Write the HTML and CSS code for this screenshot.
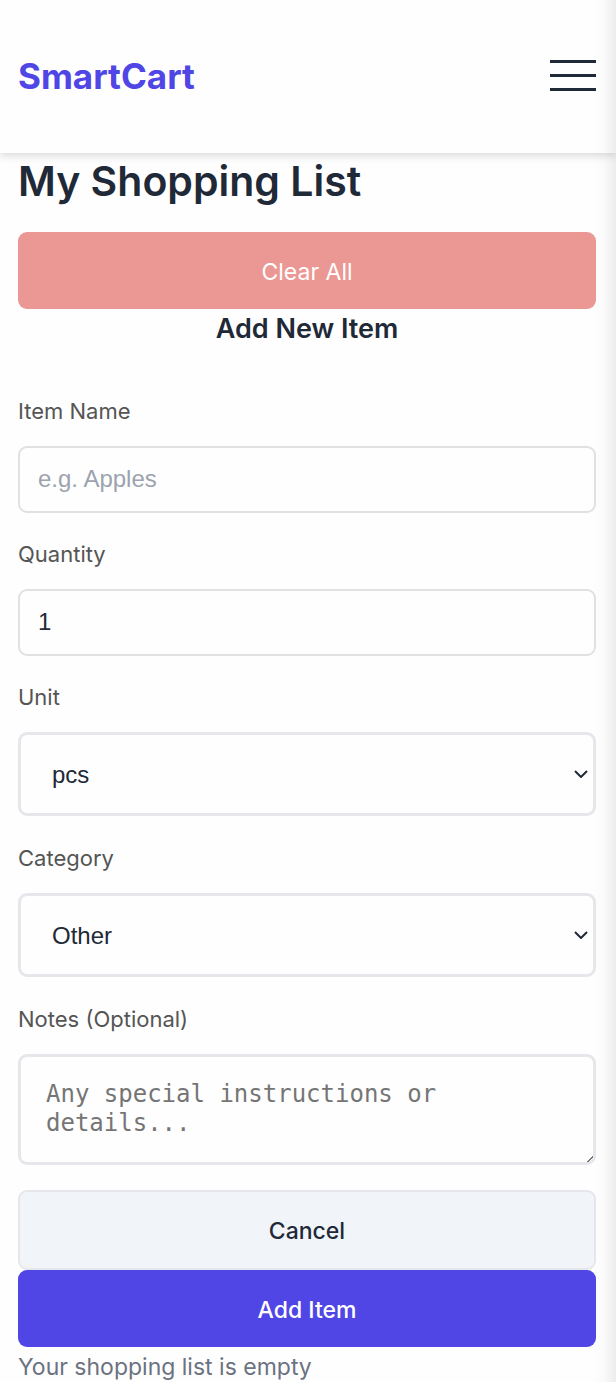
FILE: index.html
```html
<!DOCTYPE html>
<html lang="en">
<head>
<meta charset="utf-8">
<meta name="viewport" content="width=device-width, initial-scale=1">
<title>SmartCart</title>
<link rel="stylesheet" href="styles.css">
</head>
<body>
<header class="header">
  <a class="brand" href="#">SmartCart</a>
  <button class="menu" type="button" aria-label="Open menu"><span class="bar"></span><span class="bar"></span><span class="bar"></span></button>
</header>
<main class="main">
  <h1 class="title">My Shopping List</h1>
  <button class="button danger" type="button">Clear All</button>
  <h2 class="subtitle">Add New Item</h2>
  <form class="form">
    <label class="label" for="name">Item Name</label>
    <input class="field" id="name" type="text" placeholder="e.g. Apples">
    <label class="label" for="quantity">Quantity</label>
    <input class="field" id="quantity" type="text" inputmode="numeric" value="1">
    <label class="label" for="unit">Unit</label>
    <div class="select-wrap">
      <select class="select" id="unit"><option>pcs</option></select>
      <svg class="chevron" viewBox="0 0 14 8" aria-hidden="true"><path d="M1 1l6 6 6-6"/></svg>
    </div>
    <label class="label" for="category">Category</label>
    <div class="select-wrap">
      <select class="select" id="category"><option>Other</option></select>
      <svg class="chevron" viewBox="0 0 14 8" aria-hidden="true"><path d="M1 1l6 6 6-6"/></svg>
    </div>
    <label class="label" for="notes">Notes (Optional)</label>
    <textarea class="notes" id="notes" placeholder="Any special instructions or details..."></textarea>
    <button class="button secondary" type="button">Cancel</button>
    <button class="button primary" type="submit">Add Item</button>
  </form>
  <p class="empty">Your shopping list is empty</p>
</main>
<div class="edge" aria-hidden="true"></div>
</body>
</html>
```
FILE: styles.css
```css
* { box-sizing: border-box; }
html { overflow-x: hidden; }
body {
  position: relative;
  margin: 0;
  color: #1f2937;
  background: #fefefe;
  font-family: Inter, "Liberation Sans", sans-serif;
  font-size: 23px;
}
.header {
  display: flex;
  align-items: center;
  justify-content: space-between;
  padding: 53px 20px 53px 18px;
  background: #fefefe;
  box-shadow: 0 3px 8px rgba(0, 0, 0, 0.14);
}
.brand {
  color: #4f46e5;
  font-size: 35px;
  font-weight: 700;
  line-height: 47px;
  text-decoration: none;
}
.menu {
  display: flex;
  flex-direction: column;
  gap: 11px;
  width: 46px;
  padding: 0 0 2px;
  border: 0;
  background: none;
}
.bar { height: 3px; background: #1f2937; }
.main { padding: 0 20px 0 18px; }
.title {
  margin: 0 0 22px;
  font-size: 41px;
  font-weight: 600;
  line-height: 57px;
}
.button {
  display: block;
  width: 100%;
  height: 77px;
  padding: 2px 0 0;
  border: 0;
  border-radius: 9px;
  color: #fff;
  font: 500 23px Inter, "Liberation Sans", sans-serif;
}
.danger {
  background: #eb9894;
  font-weight: 400;
}
.subtitle {
  margin: 0 0 48px;
  font-size: 27px;
  font-weight: 600;
  line-height: 39px;
  text-align: center;
}
.label {
  display: block;
  margin: 0 0 20px;
  color: #555;
  font-size: 22px;
  font-weight: 400;
  line-height: 30px;
}
.field, .select, .notes {
  display: block;
  width: 100%;
  margin: 0;
  color: #1f2937;
  background: #fefefe;
}
.field {
  height: 67px;
  margin-bottom: 26px;
  padding: 0 18px 2px;
  border: 2px solid #e1e1e3;
  border-radius: 9px;
  font: 24px "Liberation Sans", sans-serif;
}
.field::placeholder { color: #9ca3af; }
.select-wrap { position: relative; margin-bottom: 27px; }
.select {
  height: 84px;
  padding: 0 31px;
  border: 3px solid #e5e7eb;
  border-radius: 9px;
  appearance: none;
  font: 24px "Liberation Sans", sans-serif;
}
.chevron {
  position: absolute;
  top: 38px;
  right: 8px;
  width: 14px;
  height: 8px;
  fill: none;
  stroke: #1f2937;
  stroke-width: 2;
  pointer-events: none;
}
.notes {
  height: 111px;
  margin-bottom: 25px;
  padding: 23px 25px;
  border: 3px solid #e5e7eb;
  border-radius: 9px;
  font: 24px/29px "DejaVu Sans Mono", monospace;
}
.notes::placeholder { color: #757575; }
.notes::-webkit-resizer {
  background: linear-gradient(135deg, transparent 78%, #777 78%, #777 84%, transparent 84%);
}
.secondary {
  height: 80px;
  border: 2px solid #e5e7eb;
  color: #1f2937;
  background: #f1f5f9;
}
.primary { background: #4f46e5; }
.empty {
  margin: 5px 0 0;
  color: #6b7280;
  line-height: 30px;
}
.edge {
  position: absolute;
  top: 0;
  right: 0;
  bottom: 0;
  width: 24px;
  background: linear-gradient(to right, transparent, rgba(0, 0, 0, 0.015) 50%, rgba(0, 0, 0, 0.07));
  pointer-events: none;
}
```
